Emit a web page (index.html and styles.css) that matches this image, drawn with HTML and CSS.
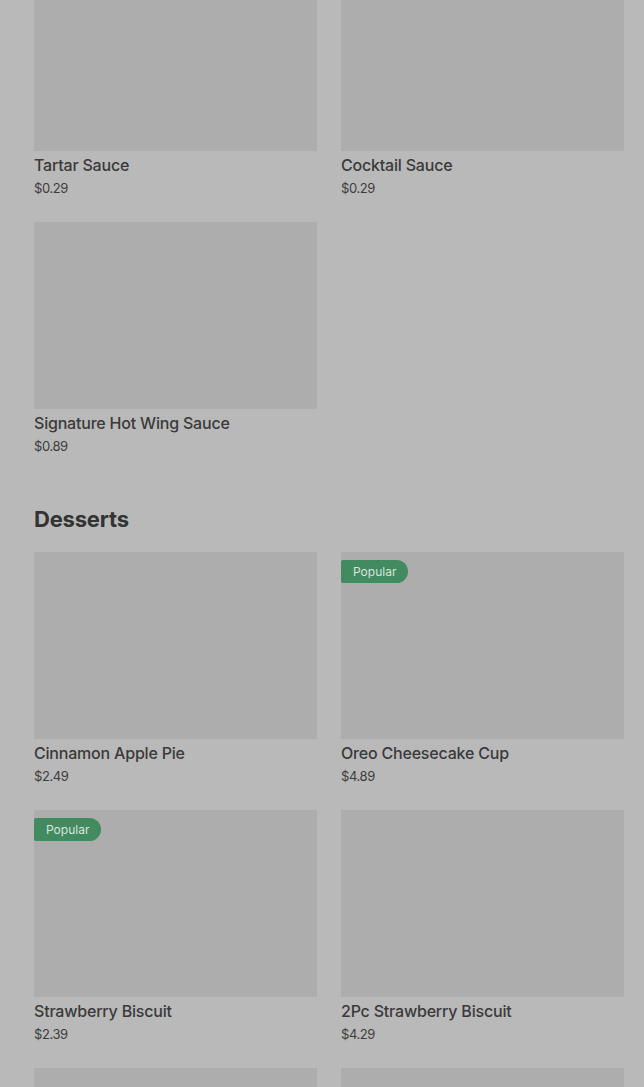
FILE: index.html
```html
<!DOCTYPE html>
<html lang="en">
<head>
    <meta charset="UTF-8">
    <meta name="viewport" content="width=device-width, initial-scale=1.0">
    <title>Menu</title>
    <link rel="stylesheet" href="styles.css">
</head>
<body>
    <div class="menu">
        <section class="section">
            <div class="grid">
                <div class="item">
                    <div class="thumb"></div>
                    <div class="name">Tartar Sauce</div>
                    <div class="price">$0.29</div>
                </div>
                <div class="item">
                    <div class="thumb"></div>
                    <div class="name">Cocktail Sauce</div>
                    <div class="price">$0.29</div>
                </div>
                <div class="item">
                    <div class="thumb"></div>
                    <div class="name">Signature Hot Wing Sauce</div>
                    <div class="price">$0.89</div>
                </div>
            </div>
        </section>

        <section class="section">
            <h2 class="section-title">Desserts</h2>
            <div class="grid">
                <div class="item">
                    <div class="thumb"></div>
                    <div class="name">Cinnamon Apple Pie</div>
                    <div class="price">$2.49</div>
                </div>
                <div class="item">
                    <div class="thumb"><span class="badge">Popular</span></div>
                    <div class="name">Oreo Cheesecake Cup</div>
                    <div class="price">$4.89</div>
                </div>
                <div class="item">
                    <div class="thumb"><span class="badge">Popular</span></div>
                    <div class="name">Strawberry Biscuit</div>
                    <div class="price">$2.39</div>
                </div>
                <div class="item">
                    <div class="thumb"></div>
                    <div class="name">2Pc Strawberry Biscuit</div>
                    <div class="price">$4.29</div>
                </div>
                <div class="item">
                    <div class="thumb"></div>
                </div>
                <div class="item">
                    <div class="thumb"></div>
                </div>
            </div>
        </section>
    </div>
</body>
</html>
```

FILE: styles.css
```css
* {
    box-sizing: border-box;
    margin: 0;
    padding: 0;
}

body {
    font-family: 'Inter', 'Roboto', sans-serif;
    background: #b9b9b9;
    color: #3a3a3a;
    overflow: hidden;
}

.menu {
    margin-top: -36px;
    padding: 0 20px 0 34px;
}

.section + .section {
    margin-top: 49px;
}

.section-title {
    font-size: 22px;
    line-height: 28px;
    font-weight: 700;
    color: #333;
    margin-bottom: 19px;
    letter-spacing: -0.2px;
}

.grid {
    display: grid;
    grid-template-columns: 1fr 1fr;
    gap: 24px;
}

.thumb {
    position: relative;
    height: 187px;
    background: #adadad;
    margin-bottom: 4px;
}

.badge {
    position: absolute;
    top: 8px;
    left: 0;
    height: 23px;
    line-height: 23px;
    padding: 0 12px;
    font-size: 12px;
    color: #d6e6dc;
    background: #428a60;
    border-radius: 2px 12px 12px 2px;
}

.name {
    font-size: 16px;
    line-height: 20px;
    font-weight: 500;
    letter-spacing: -0.2px;
    color: #3a3a3a;
}

.price {
    margin-top: 3px;
    font-size: 13px;
    line-height: 20px;
    letter-spacing: -0.4px;
    color: #3d3d3d;
}
```
